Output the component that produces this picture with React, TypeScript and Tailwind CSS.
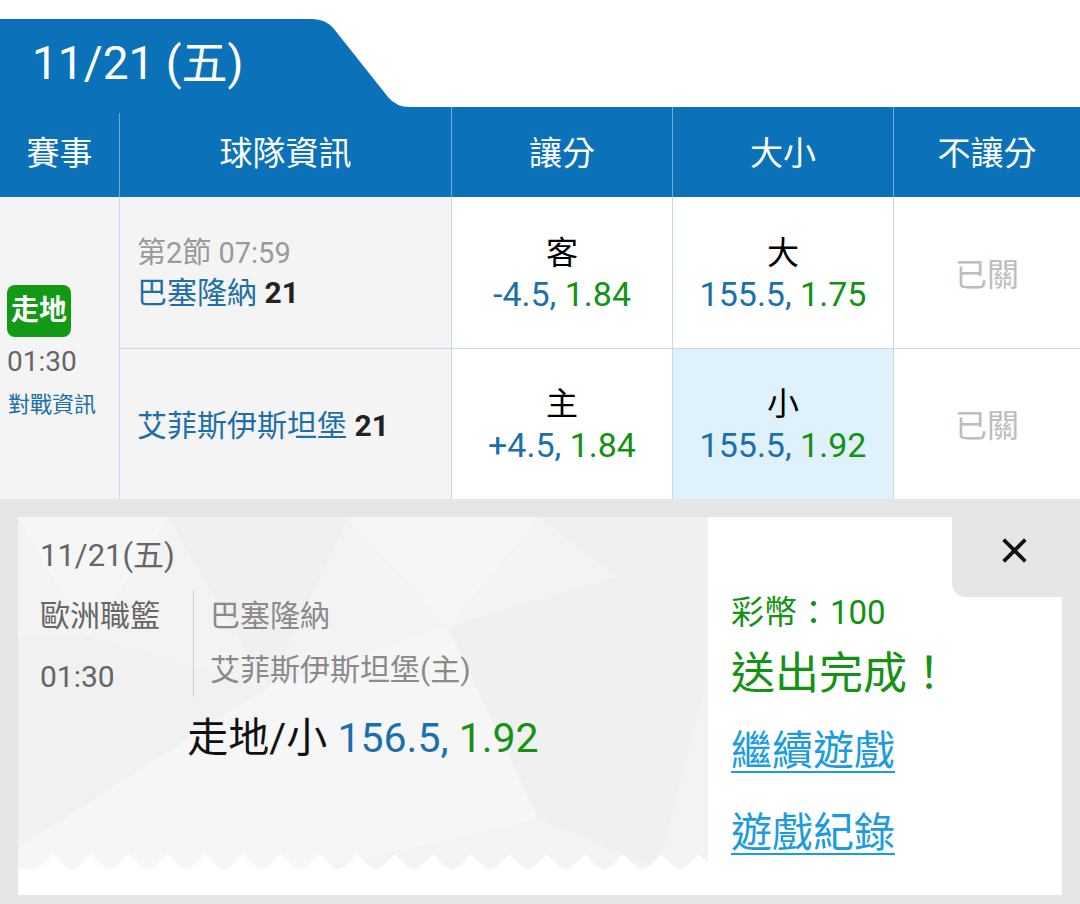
import React from "react";

const BLUE = "bg-[#0b72b9]";

function Tab() {
  return (
    <div className="flex pt-[19px]">
      <div className={`${BLUE} flex h-[88px] w-[300px] items-center pl-[32px] text-[46px] leading-none text-white`}>
        11/21 (五)
      </div>
      {/* 탭 오른쪽 경사 */}
      <svg width="120" height="88" viewBox="0 0 120 88" aria-hidden="true">
        <path d="M0 0 H12 Q26 0 34 10 L88 78 Q96 88 110 88 H0 Z" fill="#0b72b9" />
      </svg>
    </div>
  );
}

const cols = "grid grid-cols-[119px_332px_221px_221px_1fr]";

function Header() {
  const heads = ["賽事", "球隊資訊", "讓分", "大小", "不讓分"];
  return (
    <div className={`${cols} ${BLUE} h-[90px] text-[33px] text-white`}>
      {heads.map((h, i) => (
        <div
          key={h}
          className={`flex items-center justify-center pt-[3px] ${i > 0 ? "border-l border-[#6fa9d8]" : ""} ${i === 1 ? "mt-[6px] pb-[6px]" : ""}`}
        >
          {h}
        </div>
      ))}
    </div>
  );
}

function Odds({ side, a, b, active }: { side: string; a: string; b: string; active?: boolean }) {
  return (
    <div
      className={`flex flex-col items-center justify-center border-l border-[#c9d8e6] pt-[2px] ${active ? "bg-[#dff2fc]" : "bg-white"}`}
    >
      <span className="text-[32px] leading-[40px] text-black">{side}</span>
      <span className="text-[34px] leading-[42px]">
        <span className="text-[#1a6fb0]">{a}</span>
        <span className="text-[#139213]">{b}</span>
      </span>
    </div>
  );
}

function Closed() {
  return (
    <div className="flex items-center justify-center border-l border-[#c9d8e6] bg-white pt-[4px] text-[32px] text-[#bdbdbd]">
      已關
    </div>
  );
}

function Table() {
  return (
    <div className={`${cols} grid-rows-[152px_150px]`}>
      <div className="row-span-2 flex flex-col justify-center bg-[#f4f4f4] pl-[7px] pt-[8px]">
        <span className="flex h-[52px] w-[64px] items-center justify-center rounded-[8px] bg-[#139a14] text-[28px] font-bold text-white">
          走地
        </span>
        <span className="mt-[6px] text-[28px] leading-[38px] text-[#666]">01:30</span>
        <span className="mt-[9px] pl-[1px] text-[22px] leading-[30px] text-[#1d6fa5]">對戰資訊</span>
      </div>

      <div className="flex flex-col justify-center border-b border-l border-[#c9d8e6] bg-[#f4f4f4] pl-[17px] pt-[2px]">
        <span className="text-[29px] leading-[39px] text-[#9a9a9a]">第2節 07:59</span>
        <span className="text-[30px] leading-[40px] text-[#1d6fa5]">
          巴塞隆納 <b className="text-[#222]">21</b>
        </span>
      </div>
      <div className="contents [&>div]:border-b">
        <Odds side="客" a="-4.5, " b="1.84" />
        <Odds side="大" a="155.5, " b="1.75" />
        <Closed />
      </div>

      <div className="flex flex-col justify-center border-l border-[#c9d8e6] bg-[#f4f4f4] pl-[17px] pt-[4px]">
        <span className="text-[30px] leading-[40px] text-[#1d6fa5]">
          艾菲斯伊斯坦堡 <b className="text-[#222]">21</b>
        </span>
      </div>
      <Odds side="主" a="+4.5, " b="1.84" />
      <Odds side="小" a="155.5, " b="1.92" active />
      <Closed />
    </div>
  );
}

function Pattern() {
  return (
    <svg className="absolute inset-0 h-full w-full" viewBox="0 0 690 351" preserveAspectRatio="none" aria-hidden="true">
      <polygon points="0,0 150,0 70,120" fill="#ffffff" opacity="0.3" />
      <polygon points="150,0 330,0 250,170" fill="#e6e6e6" opacity="0.2" />
      <polygon points="330,0 520,0 430,110" fill="#ffffff" opacity="0.3" />
      <polygon points="520,0 690,0 690,160 600,60" fill="#e8e8e8" opacity="0.25" />
      <polygon points="0,120 70,120 250,170 0,330" fill="#ebebeb" opacity="0.2" />
      <polygon points="250,170 430,110 520,300 300,351" fill="#ffffff" opacity="0.3" />
      <polygon points="430,110 600,60 690,160 640,351 520,300" fill="#e8e8e8" opacity="0.2" />
      <polygon points="0,330 250,170 300,351 0,351" fill="#ffffff" opacity="0.25" />
    </svg>
  );
}

function Zigzag() {
  const peaks = Array.from({ length: 19 }, (_, i) => 35 + i * 38);
  return (
    <svg width="690" height="15" viewBox="0 0 690 15" className="block" aria-hidden="true">
      {peaks.map((p) => (
        <path
          key={p}
          d={`M${p - 19} 15 Q${p - 14} 15 ${p - 10} 10 L${p} 0 L${p + 10} 10 Q${p + 14} 15 ${p + 19} 15 Z`}
          fill="#ffffff"
        />
      ))}
    </svg>
  );
}

function Receipt() {
  return (
    <div className="flex h-[378px] w-[690px] flex-col bg-white">
      <div className="relative flex flex-1 flex-col bg-[#f3f3f3]">
        <Pattern />
        <div className="relative flex flex-1 flex-col px-[22px] pt-[19px]">
          <span className="text-[31px] leading-[40px] text-[#666]">11/21(五)</span>
          <div className="mt-[14px] flex">
            <div className="flex w-[153px] flex-col gap-[21px] pt-[6px] text-[30px] leading-[40px] text-[#666]">
              <span>歐洲職籃</span>
              <span>01:30</span>
            </div>
            <div className="flex flex-col gap-[14px] border-l border-[#cfcfcf] pb-[5px] pl-[16px] pt-[6px] text-[30px] leading-[40px] text-[#8a8a8a]">
              <span>巴塞隆納</span>
              <span>艾菲斯伊斯坦堡(主)</span>
            </div>
          </div>
          <div className="mt-[17px] text-center text-[41px] leading-[48px] text-[#111]">
            走地/小 <span className="text-[#1a6fb0]">156.5, </span>
            <span className="text-[#139213]">1.92</span>
          </div>
        </div>
        <div className="relative mt-auto">
          <Zigzag />
        </div>
      </div>
      <div className="h-[26px] bg-white" />
    </div>
  );
}

function Result() {
  return (
    <div className="relative h-[378px] w-[354px] bg-white pl-[23px] pt-[76px]">
      <button className="absolute right-0 top-0 flex h-[80px] w-[110px] items-start justify-end rounded-bl-[14px] bg-[#e6e6e6] pr-[35px] pt-[21px]">
        <svg width="25" height="25" viewBox="0 0 25 25" aria-hidden="true">
          <path d="M3 3 L22 22 M22 3 L3 22" stroke="#111" strokeWidth="3.8" strokeLinecap="square" />
        </svg>
      </button>
      <div className="flex flex-col text-[#139213]">
        <span className="text-[33px] leading-[40px]">彩幣：100</span>
        <span className="mt-[14px] text-[44px] leading-[54px]">送出完成！</span>
      </div>
      <div className="mt-[24px] flex flex-col items-start gap-[30px] text-[41px] leading-[52px] text-[#1a9be3]">
        <a className="underline decoration-2 underline-offset-[6px]">繼續遊戲</a>
        <a className="underline decoration-2 underline-offset-[6px]">遊戲紀錄</a>
      </div>
    </div>
  );
}

export default function App() {
  return (
    <div className="h-[904px] w-[1080px] overflow-hidden bg-white font-[family-name:Roboto,'Noto_Sans_CJK_TC',sans-serif]">
      <Tab />
      <Header />
      <Table />
      <div className="flex h-[405px] bg-[#e6e6e6] pl-[18px] pt-[18px]">
        <Receipt />
        <Result />
      </div>
    </div>
  );
}
